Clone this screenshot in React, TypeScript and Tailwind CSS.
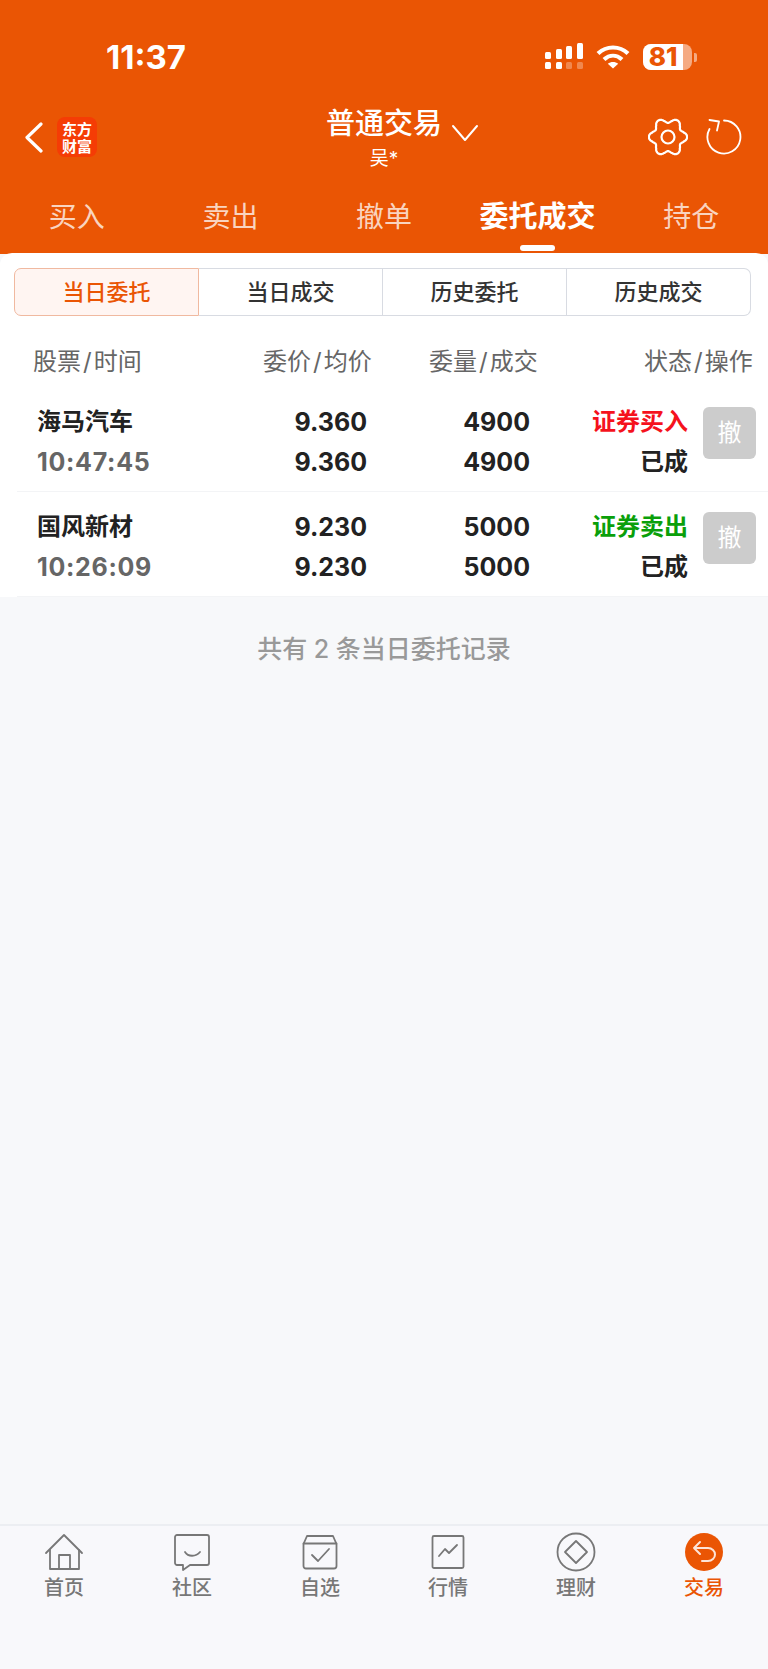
import React from 'react';

const cjk = "font-['Inter','Noto_Sans_CJK_SC',sans-serif]";

const tabs = ['买入', '卖出', '撤单', '委托成交', '持仓'];
const subTabs = ['当日委托', '当日成交', '历史委托', '历史成交'];

const orders = [
  { name: '海马汽车', time: '10:47:45', price: '9.360', qty: '4900', side: '证券买入', sideColor: 'text-[#f5121d]' },
  { name: '国风新材', time: '10:26:09', price: '9.230', qty: '5000', side: '证券卖出', sideColor: 'text-[#0a9f0a]' },
];

// six rounded lobes, sampled round the centre
const gearPath = (() => {
  const pts: string[] = [];
  for (let i = 0; i < 144; i++) {
    const a = (i / 144) * Math.PI * 2;
    const c = Math.cos(6 * a);
    const r = 16.6 + 2.5 * (c > 0 ? Math.pow(c, 0.7) : -Math.pow(-c, 1.4));
    pts.push(`${(20 + r * Math.cos(a)).toFixed(2)} ${(19 + r * Math.sin(a)).toFixed(2)}`);
  }
  return `M${pts.join('L')}Z`;
})();

const StatusIcons = () => (
  <div className="flex items-center">
    <svg width="40" height="28" viewBox="0 0 40 28" fill="white">
      <rect x="1" y="9" width="6" height="7" rx="1.5" />
      <rect x="12" y="6" width="6" height="10" rx="1.5" />
      <rect x="22" y="3" width="6" height="13" rx="1.5" />
      <rect x="33" y="0" width="6" height="16" rx="1.5" />
      <rect x="1" y="19" width="6" height="7" rx="1.5" />
      <rect x="12" y="19" width="6" height="7" rx="1.5" />
      <rect x="22" y="19" width="6" height="7" rx="1.5" fillOpacity="0.3" />
      <rect x="33" y="19" width="6" height="7" rx="1.5" fillOpacity="0.3" />
    </svg>
    <svg className="ml-[12px]" width="34" height="26" viewBox="0 0 34 26" fill="none" stroke="white" strokeWidth="4.2">
      <path d="M2 9.5C10.5 1.5 23.5 1.5 32 9.5" />
      <path d="M8 15.5C13.5 10.5 20.500 10.500 26 15.500" />
      <path d="M17 24.500L11.800 19.800C14.800 17.300 19.200 17.300 22.200 19.800Z" fill="white" stroke="none" />
    </svg>
    <div className="ml-[13px] flex h-[26px] w-[49px] items-center rounded-[8px] bg-white/50">
      <div className="flex h-full w-[40px] items-center justify-center rounded-l-[8px] bg-white">
        <span className="font-['Inter',sans-serif] text-[26px] leading-none font-extrabold text-[#ea5504]">81</span>
      </div>
    </div>
    <div className="ml-[2px] h-[9px] w-[3px] rounded-r-[2px] bg-white/50" />
  </div>
);

const Gear = () => (
  <svg width="40" height="38" viewBox="0 0 40 38" fill="none" stroke="white" strokeWidth="2.2" strokeLinejoin="round">
    <path d={gearPath} />
    <circle cx="20" cy="19" r="6.500" />
  </svg>
);

const Refresh = () => (
  <svg width="36" height="36" viewBox="0 0 36 36" fill="none" stroke="white" strokeWidth="1.800" strokeLinecap="round" strokeLinejoin="round">
    <path d="M18 1.500A16.500 16.500 0 1 1 3.500 10" />
    <path d="M3.500 1L13 2.500L11 11.500" />
  </svg>
);

const Header = () => (
  <div className={`h-[254px] bg-[#ea5504] text-white ${cjk}`}>
    <div className="flex h-[106px] items-start justify-between pt-[43px] pr-[71px] pl-[106px]">
      <span className="font-['Inter',sans-serif] text-[33px] leading-[28px] font-bold">11:37</span>
      <StatusIcons />
    </div>
    <div className="grid h-[68px] grid-cols-[1fr_auto_1fr]">
      <div className="flex items-start pt-[16px] pl-[24px]">
        <svg width="19" height="31" viewBox="0 0 19 31" fill="none" stroke="white" strokeWidth="3.200" strokeLinecap="round" strokeLinejoin="round">
          <path d="M17 2L3 15.500L17 29" />
        </svg>
        <div className="mt-[-5px] ml-[14px] flex h-[40px] w-[40px] items-center justify-center rounded-[8px] bg-[#f53c05] text-center font-['Noto_Sans_CJK_SC',serif] text-[15px] leading-[17px] font-bold">
          东方
          <br />
          财富
        </div>
      </div>
      <div className="flex flex-col items-center">
        <span className="text-[29px] leading-[36px] font-medium">普通交易</span>
        <span className="mt-[6px] text-[19px] leading-[22px]">吴*</span>
      </div>
      <div className="flex items-start justify-between pr-[26px] pl-[9px]">
        <svg className="mt-[17px]" width="28" height="20" viewBox="0 0 28 20" fill="none" stroke="white" strokeWidth="2" strokeLinecap="round" strokeLinejoin="round">
          <path d="M2 3L14 17L26 3" />
        </svg>
        <div className="flex items-center gap-[18px] pt-[12px]">
          <Gear />
          <Refresh />
        </div>
      </div>
    </div>
    <div className="grid grid-cols-5">
      {tabs.map((t, i) => (
        <div key={t} className="relative flex h-[80px] items-start justify-center pt-[24px]">
          <span className={i === 3 ? 'text-[29px] leading-[38px] font-bold text-white' : 'text-[28px] leading-[38px] text-white/75'}>{t}</span>
          {i === 3 && <div className="absolute top-[71px] h-[6px] w-[35px] rounded-full bg-white" />}
        </div>
      ))}
    </div>
  </div>
);

const SubTabs = () => (
  <div className="flex h-[48px]">
    {subTabs.map((t, i) => (
      <div
        key={t}
        className={
          i === 0
            ? 'flex w-[185px] items-center justify-center rounded-l-[7px] border border-[#f0b9a0] bg-[#fff5f2] text-[22px] font-medium text-[#ea5504]'
            : i === 3
              ? 'flex w-[184px] items-center justify-center rounded-r-[7px] border border-l-0 border-[#d8dbe2] text-[22px] font-medium text-[#333333]'
              : 'flex w-[184px] items-center justify-center border border-l-0 border-[#d8dbe2] text-[22px] font-medium text-[#333333]'
        }
      >
        {t}
      </div>
    ))}
  </div>
);

const OrderRow = ({ o }: { o: (typeof orders)[number] }) => (
  <div className="ml-[17px] flex h-[105px] items-start border-b border-[#f3f4f6] pt-[15px]">
    <div className="w-[350px] pl-[20px]">
      <div className="grid grid-cols-[163px_167px] text-[25px] leading-[40px] font-bold text-[#222222]">
        <span className="text-[24px]">{o.name}</span>
        <span className="text-right">{o.price}</span>
        <span className="tracking-[0.7px] text-[#666666]">{o.time}</span>
        <span className="text-right">{o.price}</span>
      </div>
    </div>
    <div className="w-[163px] text-right text-[25px] leading-[40px] font-bold text-[#222222]">
      <div>{o.qty}</div>
      <div>{o.qty}</div>
    </div>
    <div className="w-[158px] text-right text-[24px] leading-[40px] font-bold text-[#222222]">
      <div className={o.sideColor}>{o.side}</div>
      <div>已成</div>
    </div>
    <div className="mt-[5px] ml-[15px] flex h-[52px] w-[53px] items-center justify-center rounded-[6px] bg-[#cccccc] text-[24px] text-white">撤</div>
  </div>
);

const HeadCell = ({ a, b, className }: { a: string; b: string; className: string }) => (
  <span className={className}>
    {a}
    <span className="px-[2px]">/</span>
    {b}
  </span>
);

const Orders = () => (
  <div className={`-mt-px rounded-t-[12px] bg-white pt-[15px] ${cjk}`}>
    <div className="px-[14px]">
      <SubTabs />
    </div>
    <div className="flex h-[71px] items-start pt-[29px] text-[24px] leading-[34px] text-[#666666]">
      <HeadCell a="股票" b="时间" className="w-[263px] pl-[33px]" />
      <HeadCell a="委价" b="均价" className="w-[166px]" />
      <HeadCell a="委量" b="成交" className="w-[215px]" />
      <HeadCell a="状态" b="操作" className="" />
    </div>
    <div>
      {orders.map((o) => (
        <OrderRow key={o.name} o={o} />
      ))}
    </div>
  </div>
);

const navIcons: Record<string, React.ReactNode> = {
  首页: (
    <svg width="40" height="38" viewBox="0 0 40 38" fill="none" stroke="#777777" strokeWidth="1.800" strokeLinejoin="round" strokeLinecap="round">
      <path d="M2 20L20 2L38 20" />
      <path d="M6 17V36H35V17" />
      <path d="M15 36V22H26V36" />
    </svg>
  ),
  社区: (
    <svg width="36" height="38" viewBox="0 0 36 38" fill="none" stroke="#777777" strokeWidth="1.800" strokeLinejoin="round" strokeLinecap="round">
      <path d="M3 2H33C34 2 35 3 35 4V30C35 31 34 32 33 32H16L9 37V32H3C2 32 1 31 1 30V4C1 3 2 2 3 2Z" />
      <path d="M11 19C14 24 22 24 26 19" />
    </svg>
  ),
  自选: (
    <svg width="36" height="36" viewBox="0 0 36 36" fill="none" stroke="#777777" strokeWidth="1.800" strokeLinejoin="round" strokeLinecap="round">
      <path d="M1.500 10L5 2H31L34.500 10V32C34.500 33.500 33.500 34.500 32 34.500H4C2.500 34.500 1.500 33.500 1.500 32Z" />
      <path d="M1.500 9.500H34.500" />
      <path d="M10 21L16 27L27 15" />
    </svg>
  ),
  行情: (
    <svg width="34" height="36" viewBox="0 0 34 36" fill="none" stroke="#777777" strokeWidth="1.800" strokeLinejoin="round" strokeLinecap="round">
      <rect x="1.500" y="2" width="31" height="32" rx="1.500" />
      <path d="M8 22L14 15L18 19L26 11" />
    </svg>
  ),
  理财: (
    <svg width="40" height="40" viewBox="0 0 40 40" fill="none" stroke="#777777" strokeWidth="1.800" strokeLinejoin="round">
      <circle cx="20" cy="20" r="18.500" />
      <path d="M20 9L31 20L20 31L9 20Z" />
    </svg>
  ),
  交易: (
    <svg width="38" height="38" viewBox="0 0 38 38" fill="none">
      <circle cx="19" cy="19" r="19" fill="#ea5504" />
      <path d="M15 9L9 15L15 21M9 15H23C27 15 30 18 30 21.500C30 25 27 28 23 28H17" stroke="#fde4d8" strokeWidth="2" strokeLinecap="round" strokeLinejoin="round" />
    </svg>
  ),
};

const BottomNav = () => (
  <div className={`grid h-[145px] grid-cols-6 border-t-2 border-[#eceef2] bg-[#f8f8fb] ${cjk}`}>
    {['首页', '社区', '自选', '行情', '理财', '交易'].map((t) => (
      <div key={t} className="flex flex-col items-center pt-[5px]">
        <div className="flex h-[42px] items-center justify-center">{navIcons[t]}</div>
        <span className={t === '交易' ? 'mt-[1px] text-[20px] leading-[28px] font-medium text-[#ea5504]' : 'mt-[1px] text-[20px] leading-[28px] font-medium text-[#777777]'}>
          {t}
        </span>
      </div>
    ))}
  </div>
);

export default function App() {
  return (
    <div className="flex h-[1669px] w-[768px] flex-col overflow-hidden bg-[#f7f8fa]">
      <Header />
      <Orders />
      <div className={`flex-1 pt-[34px] text-center text-[25px] leading-[36px] font-medium text-[#999999] ${cjk}`}>共有 2 条当日委托记录</div>
      <BottomNav />
    </div>
  );
}
